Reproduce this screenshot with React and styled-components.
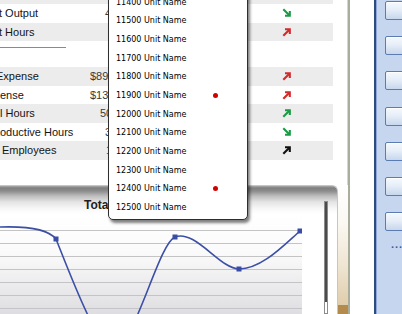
import React from "react";
import styled, { createGlobalStyle } from "styled-components";

const Global = createGlobalStyle`
  *, *::before, *::after { box-sizing: border-box; }
  html, body { margin: 0; padding: 0; background: #fff; }
  body { font-family: "Liberation Sans", Arial, sans-serif; }
`;

const Screen = styled.div`
  width: 402px;
  height: 314px;
  overflow: hidden;
  display: flex;
  background: #fff;
`;

const Main = styled.div`
  position: relative;
  flex: 0 0 350px;
  display: flex;
  flex-direction: column;
  border-right: 2px solid #a8ad9c;
  box-shadow: inset -1px 0 0 #d3d6cc;
`;

const Table = styled.div`
  margin-top: -14.5px;
  width: 333px;
  display: flex;
  flex-direction: column;
`;

const Row = styled.div`
  height: 18.5px;
  display: grid;
  grid-template-columns: 90px 18px 1fr 10px 41px;
  align-items: center;
  background: ${(p) => (p.$striped ? "#ececec" : "transparent")};
  font-size: 11px;
  color: #141414;
`;

const Label = styled.span`
  white-space: nowrap;
  margin-left: ${(p) => p.$shift || 0}px;
`;

const Value = styled.span`
  white-space: nowrap;
  overflow: hidden;
  color: #3a3a3a;
  padding-left: ${(p) => p.$indent || 0}px;
`;

const ArrowCell = styled.span`
  grid-column: 4;
  display: flex;
  align-items: center;
  justify-content: center;
`;

const SectionBreak = styled.div`
  height: 26px;
  padding-top: 6px;
`;

const Rule = styled.div`
  width: 66px;
  height: 1px;
  background: #8a8a8a;
`;

const ChartRow = styled.div`
  margin-top: 25.5px;
  flex: 1;
  display: flex;
  min-height: 0;
`;

const ChartPanel = styled.div`
  flex: 1;
  margin-left: -10px;
  padding-left: 10px;
  border: 1px solid #c6c6c6;
  border-left: none;
  border-bottom: none;
  border-top-right-radius: 6px;
  background: linear-gradient(
    to bottom,
    #a9a9a9 0px,
    #7f7f7f 2px,
    #8c8c8c 5px,
    #bdbdbd 10px,
    #e4e4e4 16px,
    #f8f8f8 23px,
    #ffffff 28px
  );
  display: grid;
  grid-template-columns: 302px 22px 4px 1fr;
  grid-template-rows: 28px 1fr;
  min-height: 0;
`;

const ChartTitle = styled.div`
  grid-column: 1;
  grid-row: 1;
  width: 108px;
  overflow: hidden;
  padding-left: 84px;
  margin-top: 12px;
  font-size: 12px;
  line-height: 14px;
  font-weight: bold;
  color: #1e1e1e;
  white-space: nowrap;
`;

const Plot = styled.svg`
  grid-column: 1;
  grid-row: 2;
  display: block;
`;

const ScrollTrack = styled.div`
  grid-column: 3;
  grid-row: 1 / span 2;
  margin-top: 15px;
  display: flex;
  flex-direction: column;
  border: 1px solid #8c8c8c;
  background: #fff;
`;

const ScrollThumb = styled.div`
  flex: 0 0 100px;
  background: #4b4b4b;
`;

const SideStrip = styled.div`
  flex: 0 0 10px;
  display: flex;
  flex-direction: column;
  justify-content: flex-end;
  background: linear-gradient(to bottom, #ffffff 0%, #fbf8f2 30%, #eee3cf 65%, #dcc7a2 100%);
`;

const StripBlock = styled.div`
  height: 9px;
  background: #b38b4c;
`;

const Dropdown = styled.div`
  position: absolute;
  left: 108px;
  top: -8px;
  width: 140px;
  background: #fff;
  border: 1px solid #2e2e2e;
  border-radius: 0 0 5px 5px;
  box-shadow: 2px 3px 3px rgba(0, 0, 0, 0.5);
  padding-bottom: 2px;
  display: flex;
  flex-direction: column;
  z-index: 5;
`;

const Item = styled.div`
  height: 18.67px;
  display: flex;
  align-items: center;
  padding-left: 7px;
  font-family: "DejaVu Sans", Verdana, sans-serif;
  font-size: 8px;
  color: #000;
  white-space: nowrap;
`;

const ItemText = styled.span`
  width: 97px;
`;

const Dot = styled.span`
  width: 5px;
  height: 5px;
  border-radius: 50%;
  background: #d30000;
`;

const Sidebar = styled.div`
  margin-left: 24px;
  flex: 1;
  background: #c6d6ee;
  border-left: 2px solid #2c4b7e;
  box-shadow: inset 1px 0 0 #8ea9d3;
  padding: 1px 0 0 9px;
  display: flex;
  flex-direction: column;
  gap: 16.2px;
  overflow: hidden;
`;

const SideButton = styled.div`
  flex: 0 0 19px;
  width: 44px;
  border: 1px solid #5a7cb2;
  border-radius: 2px;
  background: linear-gradient(to bottom, #f6f9fd 0%, #e6eef8 45%, #c8d7ed 100%);
  box-shadow: inset 0 1px 0 #ffffff;
`;

const More = styled.div`
  margin-top: -8.7px;
  margin-left: 6px;
  font-size: 11px;
  line-height: 11px;
  font-weight: bold;
  letter-spacing: 1px;
  color: #3b5da0;
`;

const arrowColors = { red: "#d42a2a", green: "#1a9a45", black: "#111" };

const Arrow = ({ dir, tone }) => {
  const c = arrowColors[tone];
  return (
    <svg width="10" height="10" viewBox="0 0 10 10">
      {dir === "up" ? (
        <>
          <path d="M1.3 8.7 L7.6 2.4" stroke={c} strokeWidth="2.1" fill="none" />
          <path d="M3 2.2 H7.8 V7" stroke={c} strokeWidth="2.1" fill="none" />
        </>
      ) : (
        <>
          <path d="M1.3 1.3 L7.6 7.6" stroke={c} strokeWidth="2.1" fill="none" />
          <path d="M7.8 3 V7.8 H3" stroke={c} strokeWidth="2.1" fill="none" />
        </>
      )}
    </svg>
  );
};

const topRows = [
  { label: "", value: "", indent: 0, dir: "up", tone: "red", striped: true },
  { label: "t Output", shift: -1, value: "4,862.5", indent: 15, dir: "down", tone: "green" },
  { label: "t Hours", shift: -1, value: "", indent: 0, dir: "up", tone: "red", striped: true },
];

const bottomRows = [
  { label: "Expense", shift: -4, value: "$899,420", indent: 0, dir: "up", tone: "red", striped: true },
  { label: "ense", shift: 0, value: "$135,760", indent: 0, dir: "up", tone: "red" },
  { label: "l Hours", shift: 0, value: "50,214", indent: 10, dir: "up", tone: "green", striped: true },
  { label: "oductive Hours", shift: 0, value: "3,948.2", indent: 15, dir: "down", tone: "green" },
  { label: "Employees", shift: 2, value: "1,245", indent: 16, dir: "up", tone: "black", striped: true },
];

const units = [
  11400, 11500, 11600, 11700, 11800, 11900, 12000, 12100, 12200, 12300, 12400, 12500,
];
const flagged = new Set([11900, 12400]);

const gridY = [16, 29, 42, 55, 68, 81, 94];
const markers = [
  [56, 25],
  [175, 23],
  [239, 55],
  [300, 17],
];

const curve =
  "M0 13 C28 12, 48 15, 56 25 C70 60, 98 135, 113 135 C134 135, 158 30, 175 23 C195 15, 220 55, 239 55 C262 55, 285 30, 300 17";

const TableRow = ({ r }) => (
  <Row $striped={r.striped}>
    <Label $shift={r.shift}>{r.label}</Label>
    <Value $indent={r.indent}>{r.value}</Value>
    <ArrowCell>
      <Arrow dir={r.dir} tone={r.tone} />
    </ArrowCell>
  </Row>
);

export default function App() {
  return (
    <>
      <Global />
      <Screen>
        <Main>
          <Table>
            {topRows.map((r, i) => (
              <TableRow key={"t" + i} r={r} />
            ))}
            <SectionBreak>
              <Rule />
            </SectionBreak>
            {bottomRows.map((r, i) => (
              <TableRow key={"b" + i} r={r} />
            ))}
          </Table>

          <ChartRow>
            <ChartPanel>
              <ChartTitle>Total Output by Unit</ChartTitle>
              <Plot width="302" height="100" viewBox="0 0 302 100">
                <defs>
                  <linearGradient id="plotBg" x1="0" y1="0" x2="0" y2="1">
                    <stop offset="0" stopColor="#ffffff" />
                    <stop offset="0.4" stopColor="#fafafa" />
                    <stop offset="1" stopColor="#dedee2" />
                  </linearGradient>
                </defs>
                <rect x="0" y="0" width="302" height="100" fill="url(#plotBg)" />
                {gridY.map((y) => (
                  <line key={y} x1="0" x2="302" y1={y + 0.5} y2={y + 0.5} stroke="#c4c4c4" strokeWidth="1" />
                ))}
                <path d={curve} fill="none" stroke="#3c4fa6" strokeWidth="1.6" />
                {markers.map(([x, y]) => (
                  <rect key={x} x={x - 2.5} y={y - 2.5} width="5" height="5" fill="#3a4da6" />
                ))}
              </Plot>
              <ScrollTrack>
                <ScrollThumb />
              </ScrollTrack>
            </ChartPanel>
            <SideStrip>
              <StripBlock />
            </SideStrip>
          </ChartRow>

          <Dropdown>
            {units.map((u) => (
              <Item key={u}>
                <ItemText>{u} Unit Name</ItemText>
                {flagged.has(u) && <Dot />}
              </Item>
            ))}
          </Dropdown>
        </Main>

        <Sidebar>
          {Array.from({ length: 7 }).map((_, i) => (
            <SideButton key={i} />
          ))}
          <More>...</More>
        </Sidebar>
      </Screen>
    </>
  );
}
